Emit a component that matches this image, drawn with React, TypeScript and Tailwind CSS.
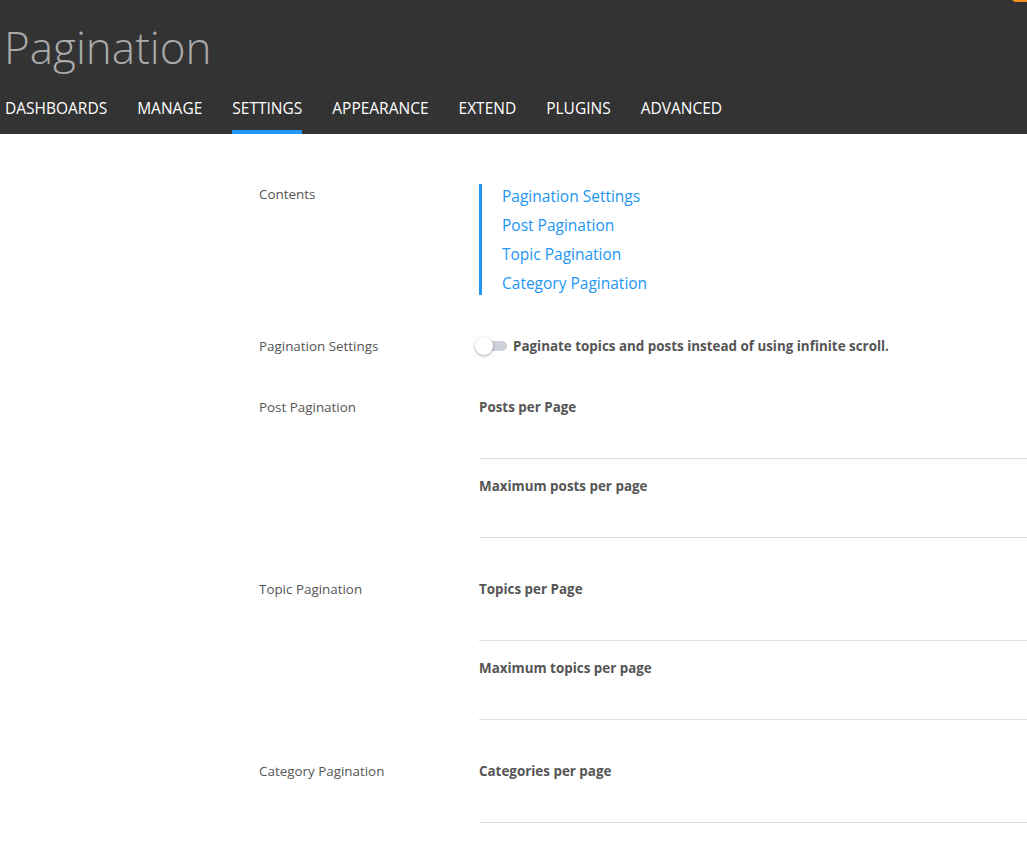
const navItems = ['Dashboards', 'Manage', 'Settings', 'Appearance', 'Extend', 'Plugins', 'Advanced'];

const contents = ['Pagination Settings', 'Post Pagination', 'Topic Pagination', 'Category Pagination'];

const sections = [
  { title: 'Post Pagination', fields: ['Posts per Page', 'Maximum posts per page'] },
  { title: 'Topic Pagination', fields: ['Topics per Page', 'Maximum topics per page'] },
  { title: 'Category Pagination', fields: ['Categories per page'] },
];

function Field({ label }: { label: string }) {
  return (
    <div className="flex flex-col">
      <label className="text-[13.4px] leading-[20px] font-bold text-[#555]">{label}</label>
      <input className="h-[42px] w-full border-b border-[#ddd] bg-transparent outline-none" type="text" />
    </div>
  );
}

export default function App() {
  return (
    <div className="min-h-screen overflow-hidden bg-white font-['Open_Sans',sans-serif]">
      {/* Header */}
      <header className="relative h-[134px] bg-[#333]">
        <div className="absolute right-0 top-[-10px] h-[12px] w-[15px] rounded-bl bg-[#f7941d]" />
        <h1 className="pl-[4px] pt-[25px] text-[44px] leading-[44px] font-light text-[#aaa]">Pagination</h1>
        <nav className="mt-[29px] flex gap-[30px] pl-[5px]">
          {navItems.map((item) => (
            <a
              key={item}
              href="#"
              className={`border-b-4 pb-[12px] text-[15.5px] leading-[20px] uppercase text-white ${
                item === 'Settings' ? 'border-[#2196f3]' : 'border-transparent'
              }`}
            >
              {item}
            </a>
          ))}
        </nav>
      </header>

      {/* Settings form */}
      <main className="flex flex-col gap-[41px] pl-[259px] pt-[50px] pb-10">
        <div className="flex">
          <div className="w-[220px] text-[13.4px] leading-[20px] text-[#555]">Contents</div>
          <ul className="flex flex-col gap-[7px] border-l-[3px] border-[#2196f3] py-[1px] pl-[20px]">
            {contents.map((c) => (
              <li key={c} className="text-[15.5px] leading-[22px]">
                <a href="#" className="text-[#2196f3]">
                  {c}
                </a>
              </li>
            ))}
          </ul>
        </div>

        <div className="flex">
          <div className="w-[220px] text-[13.4px] leading-[20px] text-[#555]">Pagination Settings</div>
          <label className="flex items-center">
            <span className="relative mr-[6px] h-[10px] w-[28px] rounded-full bg-[#ccd0d8]">
              <span className="absolute left-[-4px] top-[-4px] h-[18px] w-[18px] rounded-full bg-white shadow-[0_1px_3px_rgba(0,0,0,0.35)]" />
            </span>
            <span className="text-[13.4px] leading-[20px] font-bold text-[#555]">
              Paginate topics and posts instead of using infinite scroll.
            </span>
          </label>
        </div>

        {sections.map((s) => (
          <div key={s.title} className="flex">
            <div className="w-[220px] shrink-0 text-[13.4px] leading-[20px] text-[#555]">{s.title}</div>
            <div className="flex flex-1 flex-col gap-[17px]">
              {s.fields.map((f) => (
                <Field key={f} label={f} />
              ))}
            </div>
          </div>
        ))}
      </main>
    </div>
  );
}
